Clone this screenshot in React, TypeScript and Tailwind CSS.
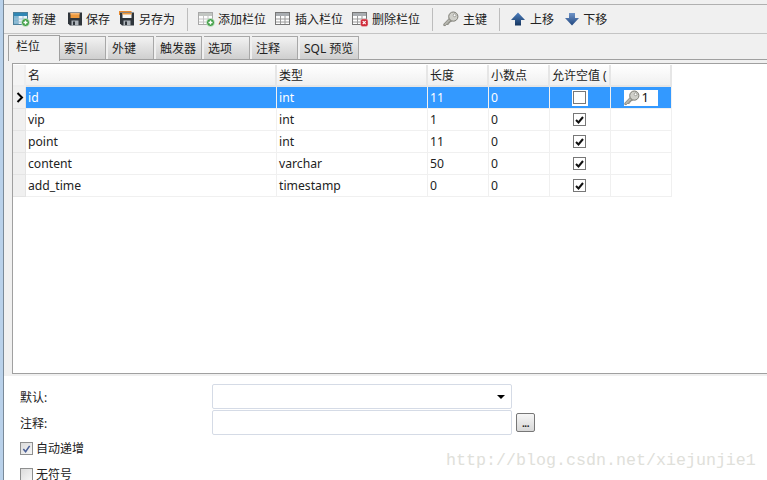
import { FC, ReactNode } from "react";

const cjk = `"Noto Sans", "Noto Sans CJK SC", sans-serif`;

// Toolbar icons
const GridIcon: FC<{ head?: string; faded?: boolean; badge?: ReactNode }> = ({ head = "#a9adb1", faded, badge }) => (
  <svg width="17" height="16" viewBox="0 0 17 16" className="shrink-0">
    <rect x="0.5" y="1.5" width="14" height="12" fill="#fdfdfd" stroke={faded ? "#a8a8a8" : "#777"} />
    <rect x="1" y="2" width="13" height="3" fill={head} />
    <path d="M1 8h13M1 11h13M5.5 5v8M10 5v8" stroke={faded ? "#c4c4c4" : "#9a9a9a"} strokeWidth="1" />
    {badge}
  </svg>
);

const PlusBadge = (
  <g>
    <circle cx="12.5" cy="11.5" r="4" fill="#3f9e45" stroke="#e8f5e8" strokeWidth="0.7" />
    <path d="M10.5 11.5h4M12.5 9.5v4" stroke="#fff" strokeWidth="1.4" />
  </g>
);

const CrossBadge = (
  <g>
    <rect x="8.5" y="8" width="7.5" height="7.5" rx="2" fill="#cf2b3a" stroke="#f4d0d0" strokeWidth="0.5" />
    <path d="M10.7 10.2l3 3M13.7 10.2l-3 3" stroke="#fff" strokeWidth="1.2" />
  </g>
);

const NewIcon = () => (
  <svg width="17" height="16" viewBox="0 0 17 16" className="shrink-0">
    <rect x="0.5" y="1.5" width="14" height="12" fill="#eaf3fa" stroke="#4d7f99" />
    <rect x="1" y="2" width="13" height="3" fill="#2f86b4" />
    <rect x="1" y="5" width="4" height="8" fill="#7fb5d2" />
    <path d="M1 8h13M1 11h13M5.5 5v8M10 5v8" stroke="#9fc0d4" strokeWidth="1" />
    {PlusBadge}
  </svg>
);

const SaveIcon: FC<{ copy?: boolean }> = ({ copy }) => (
  <svg width="16" height="16" viewBox="0 0 16 16" className="shrink-0">
    {copy && <path d="M0.5 4V0.5h12" fill="none" stroke="#e8892c" strokeWidth="1.4" />}
    <path d="M1 1.5h14v13H3l-2-2z" fill="#2f353b" />
    <rect x="3.5" y="2" width="9" height="5" fill={copy ? "#f6f6f6" : "#ee9a3d"} />
    <rect x="3.5" y="2" width="9" height="1.5" fill={copy ? "#ee9a3d" : "#f5b777"} />
    <rect x="4.5" y="9.5" width="7" height="5" fill="#aeb4ba" />
    <rect x="6" y="10.5" width="2" height="3.5" fill="#2f353b" />
  </svg>
);

const KeyIcon = () => (
  <svg width="16" height="16" viewBox="0 0 16 16" className="shrink-0">
    <path d="M0.8 13l6.4-6.6 2.6 2.6-1.6 1.4H6.8v1.5H5.3v1.5H3.6l-1.2 1.2H0.8z" fill="#b5b5ae" stroke="#77776f" strokeWidth="0.8" />
    <circle cx="10.3" cy="5.6" r="4.6" fill="#cfcfc9" stroke="#7c7c74" strokeWidth="1" />
    <circle cx="11.6" cy="4.3" r="1.4" fill="#fbfbfb" stroke="#8a8a82" strokeWidth="0.7" />
  </svg>
);

const MoveIcon: FC<{ down?: boolean }> = ({ down }) => (
  <svg width="14" height="14" viewBox="0 0 14 14" className="shrink-0">
    <defs>
      <linearGradient id={down ? "mvd" : "mvu"} x1="0" y1="0" x2="0" y2="1">
        <stop offset="0" stopColor={down ? "#6f94c8" : "#4d7fc0"} />
        <stop offset="1" stopColor={down ? "#20467f" : "#16365f"} />
      </linearGradient>
    </defs>
    <path
      d={down ? "M4 1h6v5h4l-7 7.5L0 6h4z" : "M7 0.5L14 8h-4v5.5H4V8H0z"}
      fill={`url(#${down ? "mvd" : "mvu"})`}
    />
  </svg>
);

const ToolItem: FC<{ icon: ReactNode; label: string; className?: string; gap?: string }> = ({ icon, label, className = "", gap = "gap-[3px]" }) => (
  <div className={`flex items-center ${gap} ${className}`}>
    {icon}
    <span className="pt-[2px] text-[12px] leading-none text-[#222]">{label}</span>
  </div>
);

const Sep: FC<{ className: string }> = ({ className }) => (
  <div className={`h-[23px] w-px bg-[#bdbdbd] ${className}`} />
);

const tabs = [
  { label: "索引", w: "w-[46px]" },
  { label: "外键", w: "w-[46px]" },
  { label: "触发器", w: "w-[46px]" },
  { label: "选项", w: "w-[46px]" },
  { label: "注释", w: "w-[46px]" },
  { label: "SQL 预览", w: "w-[59px]" },
];

const columns = ["名", "类型", "长度", "小数点", "允许空值 ("];
const colWidths = "grid-cols-[13px_251px_151px_61px_61px_61px_61px]";

const rows = [
  { name: "id", type: "int", len: "11", dec: "0", nullable: false, selected: true },
  { name: "vip", type: "int", len: "1", dec: "0", nullable: true },
  { name: "point", type: "int", len: "11", dec: "0", nullable: true },
  { name: "content", type: "varchar", len: "50", dec: "0", nullable: true },
  { name: "add_time", type: "timestamp", len: "0", dec: "0", nullable: true },
];

const CellCheck: FC<{ checked: boolean; selected?: boolean }> = ({ checked, selected }) => (
  <div className={`flex items-center justify-center ${selected ? "h-[16px] w-[16px] bg-white" : ""}`}>
    <div className="flex h-[13px] w-[13px] items-center justify-center border border-[#777] bg-white">
      {checked && (
        <svg width="9" height="8" viewBox="0 0 9 8">
          <path d="M1 4l2.5 2.5L8 1" fill="none" stroke="#111" strokeWidth="2" />
        </svg>
      )}
    </div>
  </div>
);

const Cell: FC<{ selected?: boolean; children?: ReactNode; className?: string }> = ({ selected, children, className = "" }) => (
  <div
    className={`flex h-[22px] items-center border-b border-r border-[#f0f0f0] text-[12.2px] ${
      selected ? "bg-[#3399ff] text-white" : "bg-white text-[#222]"
    } ${className}`}
  >
    {children}
  </div>
);

const FormCheck: FC<{ checked?: boolean; label: string }> = ({ checked, label }) => (
  <div className="flex items-center gap-[3px]">
    <div className="flex h-[13px] w-[13px] items-center justify-center border border-[#8e8f8f] bg-gradient-to-br from-[#dcdcdc] to-[#f6f6f6] p-px">
      {checked && (
        <svg width="10" height="10" viewBox="0 0 10 10">
          <path d="M1.5 5l2.5 3L8.5 1.5" fill="none" stroke="#4a5f97" strokeWidth="1.7" />
        </svg>
      )}
    </div>
    <span className="text-[12px] leading-none text-[#222]">{label}</span>
  </div>
);

export default function App() {
  return (
    <div className="relative flex h-[480px] w-[767px] overflow-hidden bg-white" style={{ fontFamily: cjk }}>
      {/* window edge */}
      <div className="w-[3px] shrink-0 bg-[#b9d1ea]" />
      <div className="w-px shrink-0 bg-[#7a8a99]" />

      <div className="flex min-w-0 flex-1 flex-col">
        <div className="h-[4px] bg-[#f0f0f0]" />
        <div className="border-t border-[#b0b0b0]" />

        {/* toolbar */}
        <div className="flex h-[28px] items-center bg-[#f0f0f0] pl-[9px]">
          <ToolItem icon={<NewIcon />} label="新建" gap="gap-[2px]" />
          <ToolItem icon={<SaveIcon />} label="保存" className="ml-[11px]" />
          <ToolItem icon={<SaveIcon copy />} label="另存为" className="ml-[9px]" gap="gap-[4px]" />
          <Sep className="ml-[12px]" />
          <ToolItem icon={<GridIcon head="#c2c6c2" faded badge={PlusBadge} />} label="添加栏位" className="ml-[10px]" />
          <ToolItem icon={<GridIcon />} label="插入栏位" className="ml-[9px]" />
          <ToolItem icon={<GridIcon badge={CrossBadge} />} label="删除栏位" className="ml-[9px]" />
          <Sep className="ml-[12px]" />
          <ToolItem icon={<KeyIcon />} label="主键" className="ml-[10px]" gap="gap-[4px]" />
          <Sep className="ml-[12px]" />
          <ToolItem icon={<MoveIcon />} label="上移" className="ml-[11px]" gap="gap-[5px]" />
          <ToolItem icon={<MoveIcon down />} label="下移" className="ml-[11px]" gap="gap-[4px]" />
        </div>
        <div className="border-t border-[#c4c4c4]" />

        {/* tabs */}
        <div className="flex h-[26px] items-end bg-[#f0f0f0] pl-[4px]">
          <div className="z-10 -mb-px flex h-[26px] w-[52px] items-start border border-b-0 border-[#a0a0a0] bg-[#f0f0f0] pl-[7px] pt-[3px] text-[12px] leading-[16px] text-[#222]">
            栏位
          </div>
          <div className="flex h-[24px] items-end gap-[2px] border-b border-[#a0a0a0] pr-[1px]">
            {tabs.map((t) => (
              <div
                key={t.label}
                className={`flex h-[23px] items-center border-r border-t border-[#a8a8a8] bg-gradient-to-b from-[#f2f2f2] to-[#cfcfcf] pl-[4px] pt-[2px] text-[12px] text-[#222] ${t.w}`}
              >
                {t.label}
              </div>
            ))}
          </div>
          <div className="h-[24px] flex-1 border-b border-[#a0a0a0]" />
        </div>

        {/* grid panel */}
        <div className="flex-1 bg-[#f0f0f0] pl-[8px] pt-[3px]">
          <div className="h-[311px] border-y border-l border-[#a0a0a0] bg-white pt-px">
            <div className={`grid w-max ${colWidths}`}>
              <div className="h-[22px] border-b-2 border-r-2 border-[#eeeeee] bg-[#f4f4f4]" />
              {columns.map((c) => (
                <div
                  key={c}
                  className="flex h-[22px] items-center overflow-hidden whitespace-nowrap border-b-2 border-r-2 border-[#e6e6e6] bg-gradient-to-b from-white to-[#f0f0f0] pl-[2px] pt-[2px] text-[12px] text-[#222]"
                >
                  {c}
                </div>
              ))}
              <div className="h-[22px] border-b-2 border-r-2 border-[#e6e6e6] bg-gradient-to-b from-white to-[#f0f0f0]" />

              {rows.map((r) => (
                <div key={r.name} className="contents">
                  <div className="flex h-[22px] items-center border-b border-r border-[#e4e4e4] bg-[#f0f0f0]">
                    {r.selected && (
                      <svg width="8" height="11" viewBox="0 0 8 11" className="ml-[3px]">
                        <path d="M1.5 1L6 5.5 1.5 10" fill="none" stroke="#000" strokeWidth="2" />
                      </svg>
                    )}
                  </div>
                  <Cell selected={r.selected} className="pl-[2px] pt-[2px]">{r.name}</Cell>
                  <Cell selected={r.selected} className="pl-[2px] pt-[2px]">{r.type}</Cell>
                  <Cell selected={r.selected} className="pl-[2px] pt-[2px]">{r.len}</Cell>
                  <Cell selected={r.selected} className="pl-[2px] pt-[2px]">{r.dec}</Cell>
                  <Cell selected={r.selected} className="justify-center pr-px">
                    <CellCheck checked={r.nullable} selected={r.selected} />
                  </Cell>
                  <Cell selected={r.selected} className="justify-center pr-px">
                    {r.selected && (
                      <div className="flex h-[16px] w-[34px] items-center bg-white text-[#111]">
                        <KeyIcon />
                        <span className="ml-[2px] text-[13px]">1</span>
                      </div>
                    )}
                  </Cell>
                </div>
              ))}
            </div>
          </div>
          <div className="h-[2px]" />

          {/* field options */}
          <div className="-ml-[8px] flex h-[104px] flex-col bg-white pl-[16px] pt-[8px]">
            <div className="flex items-center">
              <span className="w-[192px] pt-[2px] text-[12px] leading-none text-[#222]">默认:</span>
              <div className="flex h-[25px] w-[300px] items-center justify-end rounded-[2px] border border-[#d5dbe6] bg-white pr-[6px]">
                <div className="h-0 w-0 border-x-[4px] border-t-[4px] border-x-transparent border-t-black" />
              </div>
            </div>
            <div className="mt-px flex items-center">
              <span className="w-[192px] pt-[2px] text-[12px] leading-none text-[#222]">注释:</span>
              <div className="h-[25px] w-[300px] rounded-[2px] border border-[#d5dbe6] bg-white" />
              <div className="ml-[4px] flex h-[19px] w-[19px] items-end justify-center rounded-[2px] border border-[#777] bg-gradient-to-b from-[#f6f6f6] to-[#d8d8d8] pb-[3px] text-[10px] leading-none text-[#222]">
                <span className="font-bold tracking-[-0.5px]">...</span>
              </div>
            </div>
            <div className="mt-[7px] flex flex-col gap-[13px]">
              <FormCheck checked label="自动递增" />
              <FormCheck label="无符号" />
            </div>
          </div>
        </div>
      </div>

      {/* watermark */}
      <div className="absolute left-[446px] top-[450px] whitespace-nowrap font-['Liberation_Mono'] text-[16.67px] leading-[22px] text-[#e0e0da]">
        http://blog.csdn.net/xiejunjie1
      </div>
    </div>
  );
}
